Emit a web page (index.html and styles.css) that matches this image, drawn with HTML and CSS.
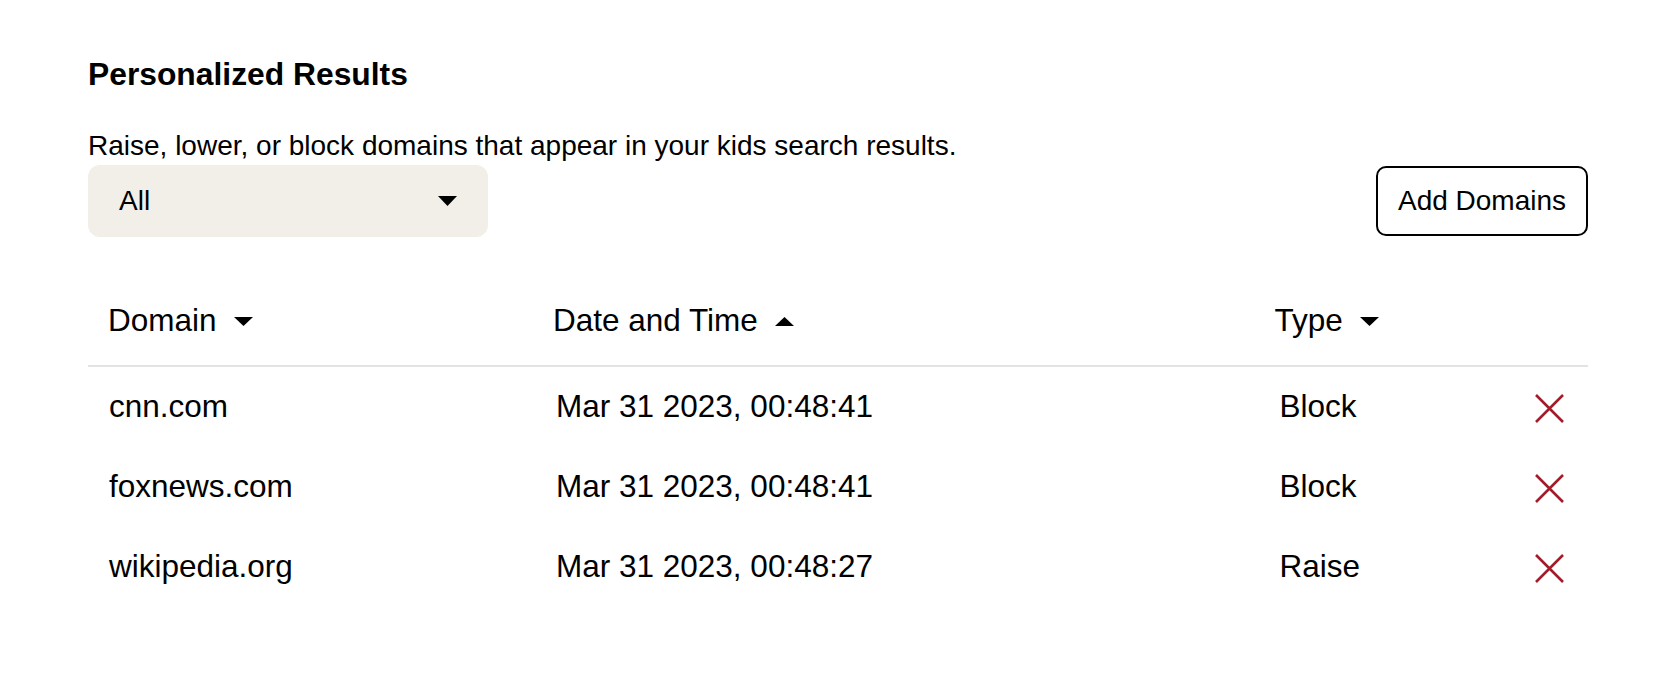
FILE: index.html
```html
<!DOCTYPE html>
<html lang="en">
<head>
<meta charset="utf-8">
<title>Personalized Results</title>
<link rel="stylesheet" href="styles.css">
</head>
<body>
<main class="page">
  <h2 class="title">Personalized Results</h2>
  <p class="desc">Raise, lower, or block domains that appear in your kids search results.</p>
  <div class="controls">
    <div class="select">
      <span class="select-value">All</span>
      <svg class="caret" width="19" height="10" viewBox="0 0 19 10"><path d="M0 0H19L9.5 10Z" fill="#000"/></svg>
    </div>
    <button class="btn">Add Domains</button>
  </div>

  <div class="table">
    <div class="row head">
      <div class="cell"><span>Domain</span><svg class="sort" width="19" height="9" viewBox="0 0 19 9"><path d="M0 0H19L9.5 9Z" fill="#000"/></svg></div>
      <div class="cell"><span>Date and Time</span><svg class="sort" width="19" height="9" viewBox="0 0 19 9"><path d="M0 9H19L9.5 0Z" fill="#000"/></svg></div>
      <div class="cell type-head"><span>Type</span><svg class="sort" width="19" height="9" viewBox="0 0 19 9"><path d="M0 0H19L9.5 9Z" fill="#000"/></svg></div>
      <div class="cell"></div>
    </div>

    <div class="row">
      <div class="cell">cnn.com</div>
      <div class="cell shifted">Mar 31 2023, 00:48:41</div>
      <div class="cell shifted">Block</div>
      <div class="cell action"><svg class="remove" width="29" height="29" viewBox="0 0 29 29"><path d="M1 1L28 28M28 1L1 28" stroke="#a11d2b" stroke-width="2.6" fill="none"/></svg></div>
    </div>
    <div class="row">
      <div class="cell">foxnews.com</div>
      <div class="cell shifted">Mar 31 2023, 00:48:41</div>
      <div class="cell shifted">Block</div>
      <div class="cell action"><svg class="remove" width="29" height="29" viewBox="0 0 29 29"><path d="M1 1L28 28M28 1L1 28" stroke="#a11d2b" stroke-width="2.6" fill="none"/></svg></div>
    </div>
    <div class="row">
      <div class="cell">wikipedia.org</div>
      <div class="cell shifted">Mar 31 2023, 00:48:27</div>
      <div class="cell shifted">Raise</div>
      <div class="cell action"><svg class="remove" width="29" height="29" viewBox="0 0 29 29"><path d="M1 1L28 28M28 1L1 28" stroke="#a11d2b" stroke-width="2.6" fill="none"/></svg></div>
    </div>
  </div>
</main>
</body>
</html>
```

FILE: styles.css
```css
html, body {
  margin: 0;
  padding: 0;
  background: #fff;
}

body {
  font-family: "Liberation Sans", Arial, Helvetica, sans-serif;
  color: #000;
}

.page {
  width: 1500px;
  padding: 56px 0 0 88px;
}

.title {
  margin: 0;
  font-size: 31.8px;
  line-height: 36px;
  font-weight: 700;
}

.desc {
  margin: 38px 0 0;
  font-size: 28px;
  line-height: 32px;
}

.controls {
  margin-top: 3px;
  display: flex;
  justify-content: space-between;
  align-items: flex-start;
}

.select {
  box-sizing: border-box;
  width: 400px;
  height: 72px;
  padding: 0 31px 0 31px;
  background: #f2efe8;
  border-radius: 12px;
  display: flex;
  align-items: center;
  justify-content: space-between;
  font-size: 28px;
}

.caret {
  display: block;
}

.btn {
  box-sizing: border-box;
  width: 212px;
  height: 70px;
  margin-top: 1px;
  background: #fff;
  border: 2px solid #000;
  border-radius: 10px;
  font-family: inherit;
  font-size: 28px;
  color: #000;
  padding: 0;
}

.table {
  margin-top: 45px;
  display: grid;
  grid-template-columns: 445px 723.5px 1fr 78px;
}

.row {
  display: contents;
}

.cell {
  display: flex;
  align-items: center;
  font-size: 31.5px;
  line-height: 36px;
  height: 36px;
  padding: 21px 0 23px 21px;
  white-space: nowrap;
}

.cell.shifted {
  padding-left: 23px;
}

.head .cell {
  padding: 20px 0 27px 20px;
  border-bottom: 2px solid #e3e3e3;
}

.head .cell.type-head {
  padding-left: 18px;
}

.sort {
  display: block;
  margin-left: 17px;
  margin-top: 2px;
}

.action {
  justify-content: center;
  padding-left: 0;
}

.remove {
  display: block;
  margin-top: 4px;
}
```
